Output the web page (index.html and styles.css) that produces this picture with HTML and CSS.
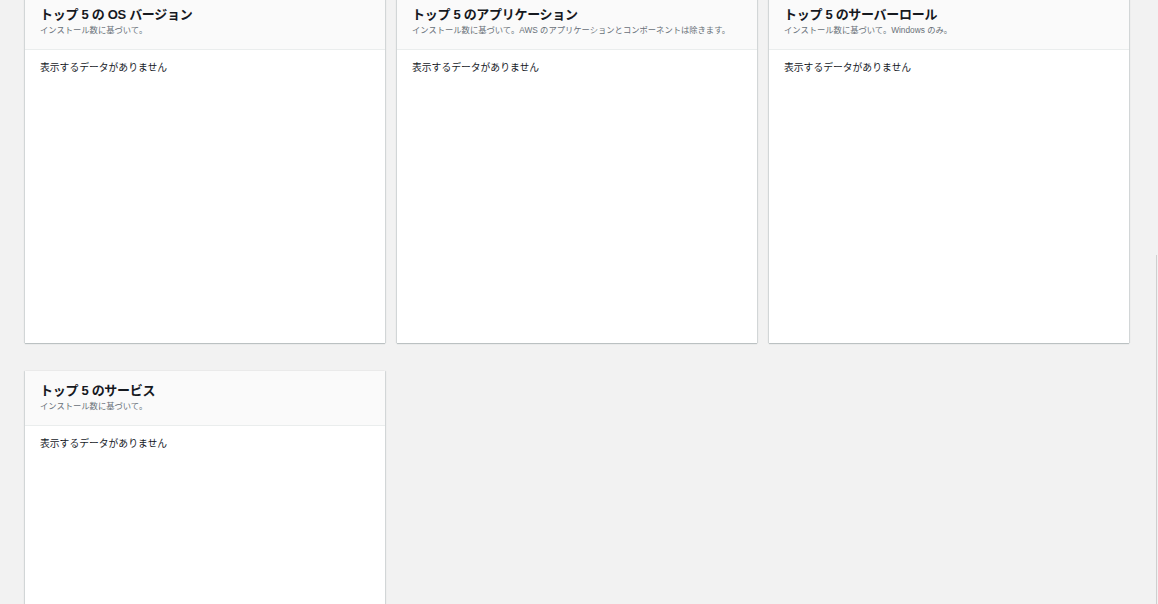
FILE: index.html
```html
<!DOCTYPE html>
<html lang="ja">
<head>
  <meta charset="UTF-8">
  <title>インベントリ</title>
  <link rel="stylesheet" href="styles.css">
</head>
<body>
  <div class="page">
    <div class="cards">
      <section class="card">
        <header class="card-header">
          <h2>トップ 5 の OS バージョン</h2>
          <p class="desc">インストール数に基づいて。</p>
        </header>
        <div class="card-body">表示するデータがありません</div>
      </section>
      <section class="card">
        <header class="card-header">
          <h2>トップ 5 のアプリケーション</h2>
          <p class="desc">インストール数に基づいて。AWS のアプリケーションとコンポーネントは除きます。</p>
        </header>
        <div class="card-body">表示するデータがありません</div>
      </section>
      <section class="card">
        <header class="card-header">
          <h2>トップ 5 のサーバーロール</h2>
          <p class="desc">インストール数に基づいて。Windows のみ。</p>
        </header>
        <div class="card-body">表示するデータがありません</div>
      </section>
      <section class="card">
        <header class="card-header">
          <h2>トップ 5 のサービス</h2>
          <p class="desc">インストール数に基づいて。</p>
        </header>
        <div class="card-body">表示するデータがありません</div>
      </section>
    </div>
  </div>
  <div class="edge"></div>
</body>
</html>
```

FILE: styles.css
```css
* {
  box-sizing: border-box;
}

html,
body{
  height: 100%;
  margin: 0;
  overflow: hidden;
  background: #f2f2f2;
  font-family: "Liberation Sans", "Noto Sans CJK JP", sans-serif;
  color: #16191f;
}

.page{
  padding: 0 29px 0 25px;
  margin-top: -5px;
}

.cards{
  display: grid;
  grid-template-columns: repeat(3, 1fr);
  column-gap: 12px;
  row-gap: 28px;
}

.card{
  background: white;
  height: 348px;
  box-shadow: 0 1px 1px 0 rgba(0, 28, 36, 0.2), 1px 0 1px 0 rgba(0, 28, 36, 0.1), -1px 0 1px 0 rgba(0, 28, 36, 0.1);
  display: flex;
  flex-direction: column;
}

.card-header{
  background: #fafafa;
  border-bottom: 1px solid #eaeded;
  padding: 10px 15px 0;
  height: 55px;
}

.card-header h2{
  margin: 0;
  font-size: 13px;
  line-height: 19px;
  font-weight: bold;
  letter-spacing: -0.3px;
}

.desc{
  margin: 0;
  font-size: 8.3px;
  line-height: 12px;
  color: #687078;
}

.card-body{
  padding: 10px 15px;
  font-size: 9.8px;
  line-height: 16px;
}

.edge{
  position: absolute;
  right: 1px;
  top: 255px;
  bottom: 0;
  width: 1px;
  background: #cfcfcf;
}
```
